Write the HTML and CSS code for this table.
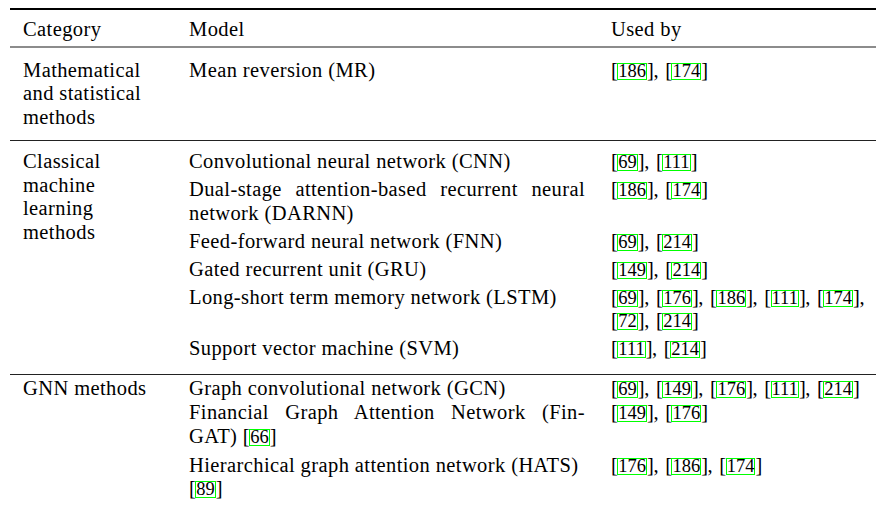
FILE: index.html
```html
<!DOCTYPE html>
<html>
<head>
<meta charset="utf-8">
<link rel="stylesheet" href="styles.css">
</head>
<body>
<div class="page">
<table class="tbl">
  <colgroup><col class="c1"><col class="c2"><col class="c3"></colgroup>
  <thead>
    <tr><th>Category</th><th>Model</th><th>Used by</th></tr>
  </thead>
  <tbody class="g1">
    <tr>
      <td class="cat">Mathematical<br>and statistical<br>methods</td>
      <td>Mean reversion (MR)</td>
      <td class="cite"><span class="r">[<span class="b">186</span>]</span>, <span class="r">[<span class="b">174</span>]</span></td>
    </tr>
  </tbody>
  <tbody class="g2">
    <tr class="first">
      <td class="cat" rowspan="6">Classical<br>machine<br>learning<br>methods</td>
      <td>Convolutional neural network (CNN)</td>
      <td class="cite"><span class="r">[<span class="b">69</span>]</span>, <span class="r">[<span class="b">111</span>]</span></td>
    </tr>
    <tr>
      <td><span class="jl">Dual-stage attention-based recurrent neural</span>network (DARNN)</td>
      <td class="cite"><span class="r">[<span class="b">186</span>]</span>, <span class="r">[<span class="b">174</span>]</span></td>
    </tr>
    <tr>
      <td>Feed-forward neural network (FNN)</td>
      <td class="cite"><span class="r">[<span class="b">69</span>]</span>, <span class="r">[<span class="b">214</span>]</span></td>
    </tr>
    <tr>
      <td>Gated recurrent unit (GRU)</td>
      <td class="cite"><span class="r">[<span class="b">149</span>]</span>, <span class="r">[<span class="b">214</span>]</span></td>
    </tr>
    <tr>
      <td>Long-short term memory network (LSTM)</td>
      <td class="cite"><span class="r">[<span class="b">69</span>]</span>, <span class="r">[<span class="b">176</span>]</span>, <span class="r">[<span class="b">186</span>]</span>, <span class="r">[<span class="b">111</span>]</span>, <span class="r">[<span class="b">174</span>]</span>,<br><span class="r">[<span class="b">72</span>]</span>, <span class="r">[<span class="b">214</span>]</span></td>
    </tr>
    <tr class="last">
      <td>Support vector machine (SVM)</td>
      <td class="cite"><span class="r">[<span class="b">111</span>]</span>, <span class="r">[<span class="b">214</span>]</span></td>
    </tr>
  </tbody>
  <tbody class="g3">
    <tr class="first">
      <td class="cat" rowspan="3">GNN methods</td>
      <td>Graph convolutional network (GCN)</td>
      <td class="cite"><span class="r">[<span class="b">69</span>]</span>, <span class="r">[<span class="b">149</span>]</span>, <span class="r">[<span class="b">176</span>]</span>, <span class="r">[<span class="b">111</span>]</span>, <span class="r">[<span class="b">214</span>]</span></td>
    </tr>
    <tr>
      <td><span class="jl">Financial Graph Attention Network (Fin-</span>GAT) <span class="r">[<span class="b">66</span>]</span></td>
      <td class="cite"><span class="r">[<span class="b">149</span>]</span>, <span class="r">[<span class="b">176</span>]</span></td>
    </tr>
    <tr>
      <td>Hierarchical graph attention network (HATS)<br><span class="r">[<span class="b">89</span>]</span></td>
      <td class="cite"><span class="r">[<span class="b">176</span>]</span>, <span class="r">[<span class="b">186</span>]</span>, <span class="r">[<span class="b">174</span>]</span></td>
    </tr>
  </tbody>
</table>
</div>
</body>
</html>
```
FILE: styles.css
```css
html, body {
  margin: 0;
  padding: 0;
  background: #fff;
}
.page {
  padding: 8px 0 0 10px;
}
.tbl {
  border-collapse: collapse;
  table-layout: fixed;
  width: 866px;
  font-family: "Liberation Serif", "DejaVu Serif", serif;
  font-size: 20.5px;
  line-height: 23.5px;
  letter-spacing: 0.4px;
  color: #000;
  border-top: 2px solid #000;
}
.c1 { width: 166px; }
.c2 { width: 422px; }
.c3 { width: 278px; }
th, td {
  text-align: left;
  vertical-align: top;
  padding: 0 13px 0 13px;
  font-weight: normal;
}
thead th {
  padding-top: 8px;
  padding-bottom: 4px;
  border-bottom: 2px solid #8c8c8c;
}
tbody.g2, tbody.g3 {
  border-top: 1px solid #222;
}
.g1 td {
  padding-top: 11px;
  padding-bottom: 11px;
}
tbody.g2 tr td, tbody.g3 tr td {
  padding-bottom: 4.5px;
}
tbody.g2 tr.first td {
  padding-top: 9px;
}
tbody.g3 tr.first td {
  padding-top: 2px;
  padding-bottom: 1px;
}
tbody.g3 tr:nth-child(2) td {
  padding-bottom: 5.5px;
}
tbody.g2 tr.last td {
  padding-bottom: 13px;
}
.g3 td.cat { padding-bottom: 0; }
.jl {
  display: block;
  text-align: justify;
  text-align-last: justify;
}
.cite {
  white-space: nowrap;
  letter-spacing: 0;
  word-spacing: 1.5px;
}
.r {
  white-space: nowrap;
  letter-spacing: -0.5px;
}
.b {
  display: inline-block;
  border: 1px solid #00ff00;
  font-size: 18.5px;
  line-height: 15px;
  padding: 0;
  letter-spacing: 0;
}
```
